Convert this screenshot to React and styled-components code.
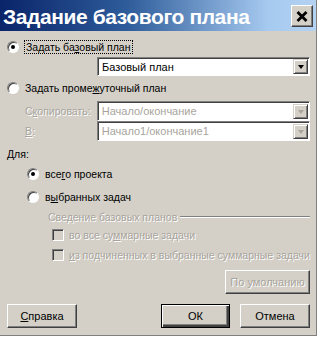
import React from "react";
import styled, { createGlobalStyle } from "styled-components";

const Global = createGlobalStyle`
  html, body { margin: 0; padding: 0; background: #ffffff; }
  body { font-family: "Liberation Sans", Arial, sans-serif; font-size: 10px; }
`;

const Dialog = styled.div`
  width: 317px;
  height: 336px;
  box-sizing: border-box;
  background: #d4d0c8;
  border-right: 1px solid #808080;
  border-bottom: 1px solid #808080;
  display: flex;
  flex-direction: column;
  color: #000;
`;

const TitleBar = styled.div`
  height: 31px;
  flex-shrink: 0;
  background: linear-gradient(to right, #0a246a 0%, #2e5c9a 40%, #a6caf0 85%, #b4d2f2 100%);
  display: flex;
  align-items: center;
  padding: 0 3px 0 3px;
`;

const Title = styled.div`
  flex: 1;
  color: #fff;
  font-family: "Liberation Sans", Arial, sans-serif;
  font-weight: bold;
  font-size: 21px;
  letter-spacing: -0.4px;
  padding-top: 2px;
`;

const CloseButton = styled.div`
  width: 22px;
  height: 22px;
  box-sizing: border-box;
  background: #d4d0c8;
  border: 1px solid;
  border-color: #fff #404040 #404040 #fff;
  box-shadow: inset -1px -1px 0 #808080;
  display: flex;
  align-items: center;
  justify-content: center;
  margin-top: 1px;
`;

const Body = styled.div`
  flex: 1;
  display: flex;
  flex-direction: column;
  padding: 0 6px 0 7px;
`;

const Row = styled.div`
  height: ${(p) => p.$h}px;
  display: flex;
  align-items: center;
  padding-left: ${(p) => p.$indent || 0}px;
  flex-shrink: 0;
`;

const RadioCircle = styled.span`
  width: 12px;
  height: 12px;
  box-sizing: border-box;
  border-radius: 50%;
  background: #fff;
  border: 1px solid;
  border-color: #808080 #fff #fff #808080;
  box-shadow: inset 1px 1px 0 #404040;
  display: flex;
  align-items: center;
  justify-content: center;
  margin-right: 6px;
  flex-shrink: 0;
  &::after {
    content: "";
    width: 4px;
    height: 4px;
    border-radius: 50%;
    background: ${(p) => (p.$checked ? "#000" : "transparent")};
  }
`;

const Label = styled.span`
  font-size: 10.5px;
  color: ${(p) => (p.$disabled ? "#a8a49c" : "#000")};
  text-shadow: ${(p) => (p.$disabled ? "1px 1px 0 #fff" : "none")};
  white-space: nowrap;
  ${(p) => p.$focus && "outline: 1px dotted #000; padding: 0 1px;"}
`;

const U = styled.u`
  text-decoration: underline;
`;

const FieldLabel = styled.span`
  width: 72px;
  font-size: 10.5px;
  color: #a8a49c;
  text-shadow: 1px 1px 0 #fff;
  white-space: nowrap;
`;

const Combo = styled.div`
  margin-left: ${(p) => p.$ml || 0}px;
  width: 214px;
  height: ${(p) => p.$height || 19}px;
  box-sizing: border-box;
  background: #fff;
  border: 1px solid;
  border-color: #808080 #fff #fff #808080;
  box-shadow: inset 1px 1px 0 #404040;
  display: flex;
  align-items: center;
  padding-left: 4px;
`;

const ComboText = styled.span`
  flex: 1;
  color: ${(p) => (p.$disabled ? "#a8a49c" : "#000")};
  font-size: 11px;
`;

const ComboArrow = styled.span`
  width: 15px;
  height: 15px;
  box-sizing: border-box;
  background: #d4d0c8;
  border: 1px solid;
  border-color: #d4d0c8 #404040 #404040 #d4d0c8;
  box-shadow: inset 1px 1px 0 #fff, inset -1px -1px 0 #808080;
  display: flex;
  align-items: center;
  justify-content: center;
  margin-right: 1px;
  &::after {
    content: "";
    border-left: 3.5px solid transparent;
    border-right: 3.5px solid transparent;
    border-top: 4px solid ${(p) => (p.$disabled ? "#a8a49c" : "#000")};
    margin-top: 1px;
  }
`;

const GroupHead = styled.div`
  display: flex;
  align-items: center;
  gap: 3px;
  width: 100%;
  &::after {
    content: "";
    flex: 1;
    height: 0;
    border-top: 1px solid #808080;
    border-bottom: 1px solid #fff;
  }
`;

const CheckBox = styled.span`
  width: 12px;
  height: 12px;
  box-sizing: border-box;
  background: #d4d0c8;
  border: 1px solid;
  border-color: #808080 #fff #fff #808080;
  box-shadow: inset 1px 1px 0 #404040;
  margin-right: 5px;
  flex-shrink: 0;
`;

const Button = styled.div`
  width: ${(p) => p.$w}px;
  height: 24px;
  box-sizing: border-box;
  background: #d4d0c8;
  border: 1px solid;
  border-color: ${(p) => (p.$default ? "#000" : "#fff #404040 #404040 #fff")};
  box-shadow: ${(p) =>
    p.$default
      ? "inset 1px 1px 0 #fff, inset -2px -2px 0 #404040, inset -3px -3px 0 #808080"
      : "inset -1px -1px 0 #808080"};
  display: flex;
  align-items: center;
  justify-content: center;
  font-size: 11px;
  color: ${(p) => (p.$disabled ? "#a8a49c" : "#000")};
  text-shadow: ${(p) => (p.$disabled ? "1px 1px 0 #fff" : "none")};
`;

const ButtonRow = styled.div`
  display: flex;
  align-items: center;
  height: 24px;
  justify-content: ${(p) => p.$justify || "flex-start"};
  gap: 10px;
  flex-shrink: 0;
`;

const Spacer = styled.div`
  flex: 1;
`;

export default function App() {
  return (
    <>
      <Global />
      <Dialog>
        <TitleBar>
          <Title>Задание базового плана</Title>
          <CloseButton>
            <svg width="12" height="11" viewBox="0 0 12 11">
              <path d="M1.5 1 L10.5 10 M10.5 1 L1.5 10" stroke="#000" strokeWidth="2.8" />
            </svg>
          </CloseButton>
        </TitleBar>
        <Body>
          <Row $h={8} />
          <Row $h={16}>
            <RadioCircle $checked />
            <Label $focus>
              Задать ба<U>з</U>овый план
            </Label>
          </Row>
          <Row $h={2} />
          <Row $h={19}>
            <Combo $ml={90}>
              <ComboText>Базовый план</ComboText>
              <ComboArrow />
            </Combo>
          </Row>
          <Row $h={4} />
          <Row $h={16}>
            <RadioCircle />
            <Label>
              Задать проме<U>ж</U>уточный план
            </Label>
          </Row>
          <Row $h={5} />
          <Row $h={20} $indent={18}>
            <FieldLabel>
              С<U>к</U>опировать:
            </FieldLabel>
            <Combo $height={20}>
              <ComboText $disabled>Начало/окончание</ComboText>
              <ComboArrow $disabled />
            </Combo>
          </Row>
          <Row $h={20} $indent={18}>
            <FieldLabel>
              <U>В</U>:
            </FieldLabel>
            <Combo $height={20}>
              <ComboText $disabled>Начало1/окончание1</ComboText>
              <ComboArrow $disabled />
            </Combo>
          </Row>
          <Row $h={5} />
          <Row $h={16}>
            <Label>Для:</Label>
          </Row>
          <Row $h={4} />
          <Row $h={16} $indent={20}>
            <RadioCircle $checked />
            <Label>
              все<U>г</U>о проекта
            </Label>
          </Row>
          <Row $h={7} />
          <Row $h={16} $indent={20}>
            <RadioCircle />
            <Label>
              в<U>ы</U>бранных задач
            </Label>
          </Row>
          <Row $h={4} />
          <Row $h={16} $indent={41}>
            <GroupHead>
              <Label $disabled>Сведение базовых планов</Label>
            </GroupHead>
          </Row>
          <Row $h={2} />
          <Row $h={16} $indent={45}>
            <CheckBox />
            <Label $disabled>
              во все су<U>м</U>марные задачи
            </Label>
          </Row>
          <Row $h={4} />
          <Row $h={16} $indent={45}>
            <CheckBox />
            <Label $disabled>
              <U>и</U>з подчиненных в выбранные суммарные задачи
            </Label>
          </Row>
          <Row $h={7} />
          <ButtonRow $justify="flex-end">
            <Button $w={85} $disabled>
              По умолчанию
            </Button>
          </ButtonRow>
          <Row $h={10} />
          <ButtonRow>
            <Button $w={70}>
              <span>
                <U>С</U>правка
              </span>
            </Button>
            <Spacer />
            <Button $w={69} $default>
              ОК
            </Button>
            <Button $w={70}>Отмена</Button>
          </ButtonRow>
          <Spacer />
        </Body>
      </Dialog>
    </>
  );
}
